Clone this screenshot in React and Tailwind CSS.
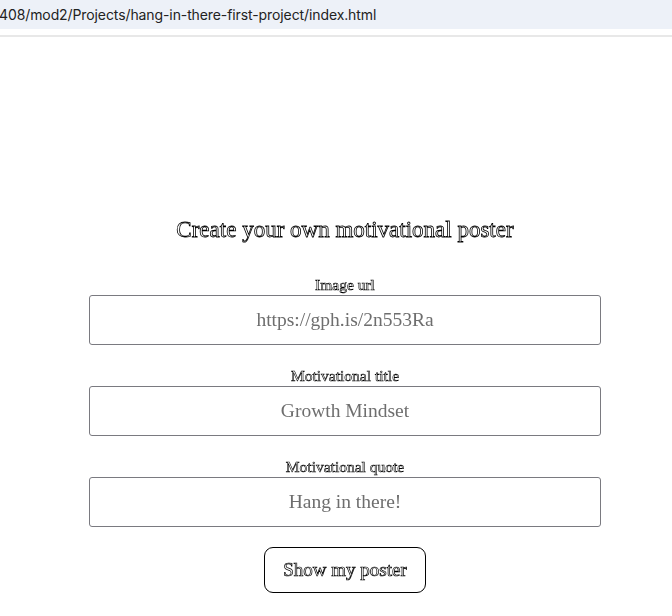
import React from "react";

const serif = { fontFamily: '"Liberation Serif", "DejaVu Serif", serif' };

function Field({ label, value }) {
  return (
    <div className="flex flex-col items-center">
      <div
        className="h-[18px] text-[15.5px] leading-[18px] text-white [-webkit-text-stroke:0.6px_#000]"
        style={serif}
      >
        {label}
      </div>
      <div
        className="mt-[1px] flex h-[50px] w-[512px] items-center justify-center rounded-[3px] border border-[#7a7a80] text-[19.5px] text-[#6e6e6e]"
        style={serif}
      >
        {value}
      </div>
    </div>
  );
}

export default function App() {
  return (
    <div className="min-h-[616px] w-[672px] overflow-hidden bg-white">
      <div
        className="flex h-[29px] items-center bg-[#edf1f8] text-[14px] text-[#222]"
        style={{ fontFamily: 'Inter, "Liberation Sans", sans-serif' }}
      >
        <span className="-ml-[1px] tracking-[-0.1px]">408/mod2/Projects/hang-in-there-first-project/index.html</span>
      </div>
      <div className="h-[6px]" />
      <div className="h-[2px] bg-[#e8e8e8]" />
      <main className="flex flex-col items-center pl-[18px] pt-[179px] opacity-[0.999] [transform:translateZ(0)]">
        <h1
          className="h-[28px] text-[23px] leading-[28px] text-white [-webkit-text-stroke:0.8px_#000]"
          style={serif}
        >
          Create your own motivational poster
        </h1>
        <div className="mt-[32px] flex flex-col gap-[22px]">
          <Field label="Image url" value="https://gph.is/2n553Ra" />
          <Field label="Motivational title" value="Growth Mindset" />
          <Field label="Motivational quote" value="Hang in there!" />
        </div>
        <button
          className="mt-[20px] flex h-[46px] w-[162px] items-center justify-center rounded-[9px] border border-black bg-white text-[19px] text-white [-webkit-text-stroke:0.7px_#000]"
          style={serif}
        >
          Show my poster
        </button>
      </main>
    </div>
  );
}
